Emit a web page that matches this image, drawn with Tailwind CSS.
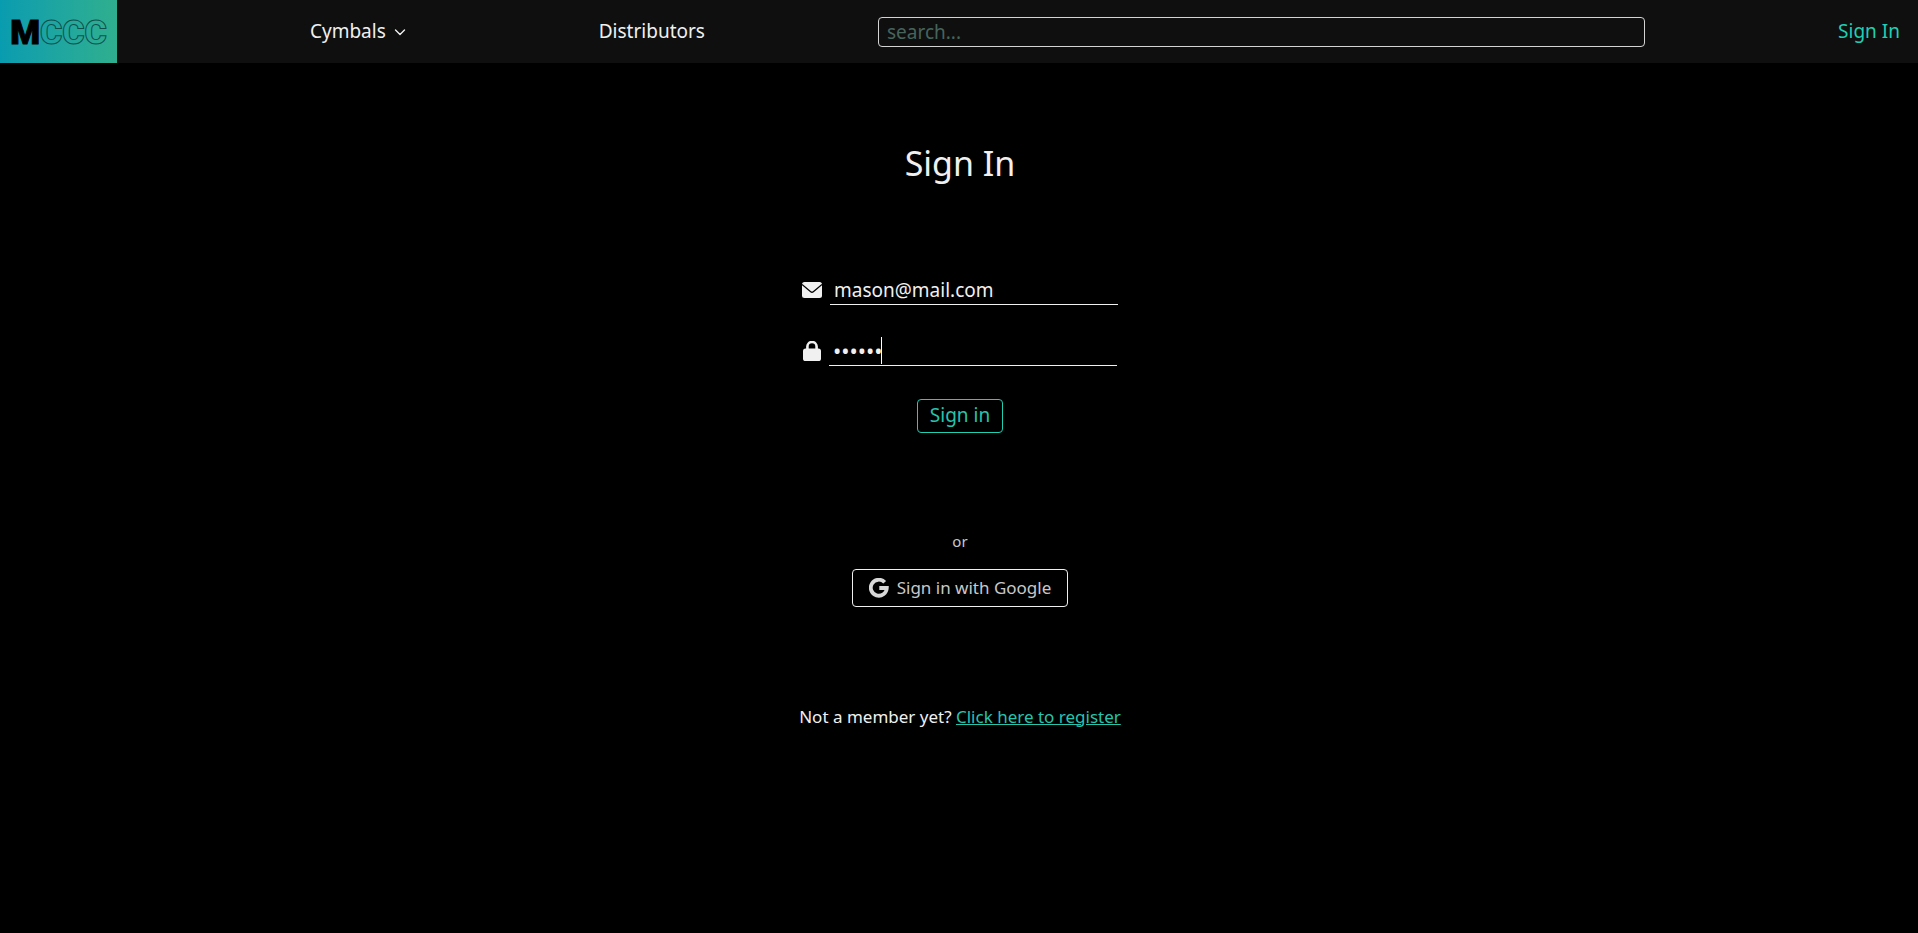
<!DOCTYPE html>
<html lang="en">
<head>
<meta charset="utf-8">
<meta name="viewport" content="width=device-width, initial-scale=1">
<title>MCCC - Sign In</title>
<script src="https://cdn.jsdelivr.net/npm/@tailwindcss/browser@4"></script>
</head>
<body class="min-h-screen bg-black font-['Segoe_UI','Noto_Sans',sans-serif] text-[#f0f0f0]">
<header>
  <nav class="flex h-[63px] items-center justify-between bg-[#0f0f0f] text-[19px]">
    <a href="#" aria-label="MCCC home" class="flex h-full w-[117px] items-center justify-center bg-linear-to-r from-[#089cb0] to-[#2faf8e] font-['Roboto',sans-serif] text-[34px] leading-none font-black text-black"><span class="[-webkit-text-stroke:1px_black]">M</span><span class="text-transparent [-webkit-text-stroke:1px_#0f4f4c]">CCC</span></a>
    <button type="button" class="flex items-center gap-2">Cymbals
      <svg class="size-3" viewBox="0 0 12 12" fill="none" stroke="currentColor" stroke-width="1.4" stroke-linecap="round" stroke-linejoin="round" aria-hidden="true"><path d="M1.5 4 6 8.5 10.500 4"/></svg>
    </button>
    <a href="#">Distributors</a>
    <input type="search" aria-label="Search" placeholder="search..." class="-ml-5 h-[30px] w-2/5 rounded border border-[#d4d4d4] bg-transparent px-2 placeholder:text-[#46645c]">
    <a href="#" class="pr-[18px] text-[#1fcfb4]">Sign In</a>
  </nav>
</header>
<main class="flex flex-col items-center pt-20 pl-0.5">
  <h1 class="text-[34px] leading-10">Sign In</h1>
  <form class="mt-[92px] flex flex-col items-center text-[19px]">
    <div class="flex items-center gap-2">
      <label for="email" aria-label="Email"><svg class="h-5 w-5" viewBox="0 0 20 20" aria-hidden="true"><rect y="2" width="20" height="16" rx="2.500" fill="#f0f0f0"/><path d="M0 4.500 8.700 11.700Q10 12.800 11.300 11.700L20 4.500" fill="none" stroke="#000" stroke-width="1.300"/></svg></label>
      <input id="email" type="email" value="mason@mail.com" class="h-[30px] w-72 border-b border-[#f0f0f0] bg-transparent px-1 outline-none">
    </div>
    <div class="mt-[31px] flex items-center gap-2">
      <label for="password" aria-label="Password"><svg class="h-5 w-[18px]" viewBox="0 0 18 20" aria-hidden="true"><path d="M4.400 9V5.600a4.600 4.600 0 0 1 9.200 0V9" fill="none" stroke="#f0f0f0" stroke-width="2.600"/><rect y="7.500" width="18" height="12.500" rx="2.600" fill="#f0f0f0"/></svg></label>
      <div class="relative">
        <input id="password" type="password" value="123456" class="h-[30px] w-72 border-b border-[#f0f0f0] bg-transparent px-1 text-[22px] outline-none">
        <span class="absolute top-px left-[52px] h-[27px] w-px bg-white" aria-hidden="true"></span>
      </div>
    </div>
    <button type="submit" class="mt-8 h-[34px] rounded border border-[#1fcfb4] px-3 text-[#27c4ad]">Sign in</button>
  </form>
  <p class="mt-24 text-[15px] leading-6 text-[#c8c8c8]">or</p>
  <button type="button" class="mt-4 flex h-[38px] items-center gap-2 rounded border border-[#f0f0f0] px-4 text-[17px] text-[#c8c8c8]">
    <svg class="size-5" viewBox="0 0 20 20" fill="none" stroke="#d8d8d8" stroke-width="3.800" aria-hidden="true"><path d="M15.700 4.300A8 8 0 1 0 17.800 10H10.300"/></svg>
    Sign in with Google
  </button>
  <p class="mt-24 text-[17px] leading-7">Not a member yet? <a href="#" class="text-[#27c4ad] underline">Click here to register</a></p>
</main>
</body>
</html>
